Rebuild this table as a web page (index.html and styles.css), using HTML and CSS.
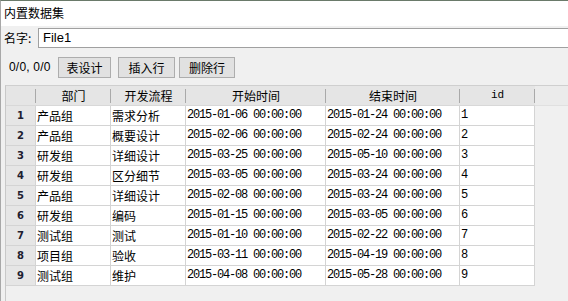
FILE: index.html
```html
<!DOCTYPE html>
<html lang="zh">
<head>
<meta charset="utf-8">
<title>内置数据集</title>
<link rel="stylesheet" href="styles.css">
</head>
<body>
<div class="window">
  <div class="titlebar">内置数据集</div>
  <div class="namerow">
    <label class="namelabel">名字:</label>
    <div class="nameinput">File1</div>
  </div>
  <div class="toolbar">
    <span class="counter">0/0, 0/0</span>
    <button class="btn btn-design">表设计</button>
    <button class="btn btn-insert">插入行</button>
    <button class="btn btn-delete">删除行</button>
  </div>
  <div class="grid">
    <div class="row head">
      <div class="c c-num"></div>
      <div class="c c-dept">部门</div>
      <div class="c c-flow">开发流程</div>
      <div class="c c-start">开始时间</div>
      <div class="c c-end">结束时间</div>
      <div class="c c-id mono">id</div>
      <div class="c c-fill"></div>
    </div>
    <div class="row"><div class="c c-num">1</div><div class="c c-dept">产品组</div><div class="c c-flow">需求分析</div><div class="c c-start mono">2015-01-06 00:00:00</div><div class="c c-end mono">2015-01-24 00:00:00</div><div class="c c-id mono">1</div></div>
    <div class="row"><div class="c c-num">2</div><div class="c c-dept">产品组</div><div class="c c-flow">概要设计</div><div class="c c-start mono">2015-02-06 00:00:00</div><div class="c c-end mono">2015-02-24 00:00:00</div><div class="c c-id mono">2</div></div>
    <div class="row"><div class="c c-num">3</div><div class="c c-dept">研发组</div><div class="c c-flow">详细设计</div><div class="c c-start mono">2015-03-25 00:00:00</div><div class="c c-end mono">2015-05-10 00:00:00</div><div class="c c-id mono">3</div></div>
    <div class="row"><div class="c c-num">4</div><div class="c c-dept">研发组</div><div class="c c-flow">区分细节</div><div class="c c-start mono">2015-03-05 00:00:00</div><div class="c c-end mono">2015-03-24 00:00:00</div><div class="c c-id mono">4</div></div>
    <div class="row"><div class="c c-num">5</div><div class="c c-dept">产品组</div><div class="c c-flow">详细设计</div><div class="c c-start mono">2015-02-08 00:00:00</div><div class="c c-end mono">2015-03-24 00:00:00</div><div class="c c-id mono">5</div></div>
    <div class="row"><div class="c c-num">6</div><div class="c c-dept">研发组</div><div class="c c-flow">编码</div><div class="c c-start mono">2015-01-15 00:00:00</div><div class="c c-end mono">2015-03-05 00:00:00</div><div class="c c-id mono">6</div></div>
    <div class="row"><div class="c c-num">7</div><div class="c c-dept">测试组</div><div class="c c-flow">测试</div><div class="c c-start mono">2015-01-10 00:00:00</div><div class="c c-end mono">2015-02-22 00:00:00</div><div class="c c-id mono">7</div></div>
    <div class="row"><div class="c c-num">8</div><div class="c c-dept">项目组</div><div class="c c-flow">验收</div><div class="c c-start mono">2015-03-11 00:00:00</div><div class="c c-end mono">2015-04-19 00:00:00</div><div class="c c-id mono">8</div></div>
    <div class="row"><div class="c c-num">9</div><div class="c c-dept">测试组</div><div class="c c-flow">维护</div><div class="c c-start mono">2015-04-08 00:00:00</div><div class="c c-end mono">2015-05-28 00:00:00</div><div class="c c-id mono">9</div></div>
  </div>
</div>
</body>
</html>
```

FILE: styles.css
```css
html, body {
  margin: 0;
  padding: 0;
  height: 100%;
}
body {
  background: #f0f0f0;
  font-family: "Noto Sans CJK SC", "Liberation Sans", sans-serif;
  font-size: 12px;
  color: #000;
  overflow: hidden;
}
.window {
  height: 100%;
  box-sizing: border-box;
  border-top: 1px solid #6a7a6a;
  border-left: 1px solid #a8a8a8;
  display: flex;
  flex-direction: column;
}
.titlebar {
  height: 25px;
  line-height: 24px;
  background: #fff;
  padding-left: 3px;
}
.namerow {
  margin-top: 2px;
  height: 20px;
  display: flex;
  align-items: center;
}
.namelabel {
  width: 34px;
  padding-left: 3px;
  line-height: 20px;
}
.nameinput {
  flex: 1;
  height: 20px;
  box-sizing: border-box;
  border: 1px solid #a0a0a0;
  border-right: none;
  background: #fff;
  font-family: "Liberation Sans", sans-serif;
  font-size: 13px;
  line-height: 18px;
  padding-left: 4px;
}
.toolbar {
  height: 37px;
  box-sizing: border-box;
  padding: 9px 0 0 8px;
  display: flex;
  align-items: flex-start;
}
.counter {
  font-family: "Liberation Sans", sans-serif;
  font-size: 12px;
  line-height: 21px;
  width: 49px;
  letter-spacing: 0.2px;
}
.btn {
  height: 21px;
  box-sizing: border-box;
  border: 1px solid #adadad;
  background: #e1e1e1;
  font-family: "Noto Sans CJK SC", sans-serif;
  font-size: 12px;
  line-height: 17px;
  padding: 0;
  color: #000;
}
.btn-design { width: 53px; }
.btn-insert { width: 57px; margin-left: 7px; }
.btn-delete { width: 56px; margin-left: 4px; }
.grid {
  flex: 1;
  margin-left: 4px;
  border-left: 1px solid #c8c8c8;
  border-top: 1px solid #cfcfcf;
}
.row {
  display: flex;
  height: 20px;
}
.c {
  box-sizing: border-box;
  height: 20px;
  border-right: 1px solid #d4d4d4;
  border-bottom: 1px solid #d4d4d4;
  background: #fff;
  line-height: 19px;
  padding-left: 1px;
  white-space: nowrap;
  overflow: hidden;
}
.c-num {
  width: 30px;
  background: #e6e6e6;
  text-align: center;
  font-family: "DejaVu Sans", sans-serif;
  font-weight: bold;
  font-size: 10px;
  color: #202030;
  padding-left: 0;
}
.c-dept { width: 75px; }
.c-flow { width: 75px; }
.c-start { width: 140px; }
.c-end { width: 134px; }
.c-id { width: 75px; }
.mono {
  font-family: "Liberation Mono", monospace;
  font-size: 12px;
  letter-spacing: -1.2px;
}
.head .c {
  border-right: none;
  border-bottom: 1px solid #d8d8d8;
  background: linear-gradient(#a9a9a9, #a9a9a9) right center / 1px 14px no-repeat, #e5e5e5;
  text-align: center;
  padding-left: 0;
}
.head .c-dept, .head .c-flow, .head .c-start, .head .c-end { font-size: 12px; }
.head .c-id { letter-spacing: 0; font-size: 11px; }
.head .c-fill {
  flex: 1;
  background: #ebebeb;
  border-bottom: 1px solid #e0e0e0;
}
```
